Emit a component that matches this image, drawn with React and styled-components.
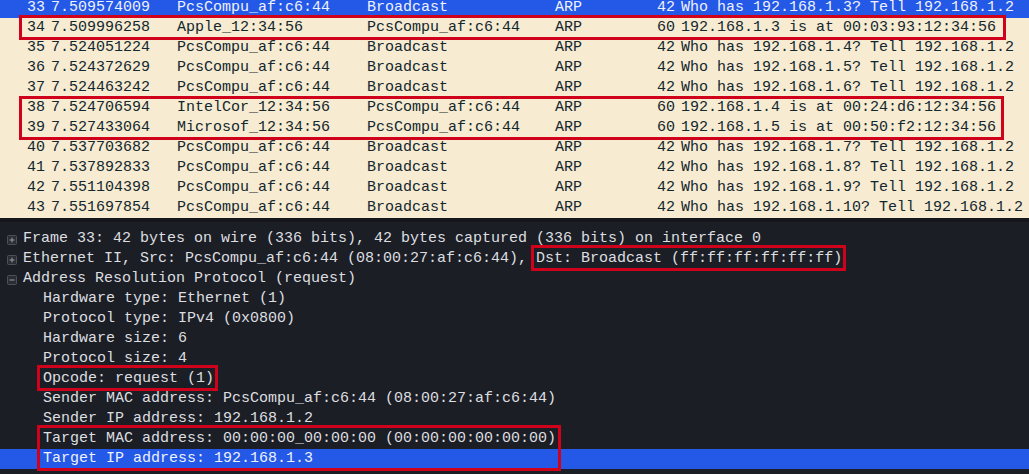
import React from "react";
import styled, { createGlobalStyle } from "styled-components";

const Global = createGlobalStyle`
  html, body { margin: 0; padding: 0; background: #1c1e25; }
  body { width: 1029px; height: 474px; overflow: hidden; }
`;

const Screen = styled.div`
  position: relative;
  width: 1029px;
  height: 474px;
  overflow: hidden;
  font-family: "Liberation Mono", "DejaVu Sans Mono", monospace;
  font-size: 15px;
  background: #1c1e25;
`;

const PacketList = styled.div`
  height: 218px;
  overflow: hidden;
  background: #f7ebd2;
`;

const Rows = styled.div`
  margin-top: -2px;
`;

const Row = styled.div`
  display: grid;
  grid-template-columns: 46px 126px 190px 188px 80px 46px 1fr;
  height: 20px;
  line-height: 20px;
  white-space: nowrap;
  background: ${(p) => (p.$selected ? "#2458e6" : "#f7ebd2")};
  color: ${(p) => (p.$selected ? "#eef2fd" : "#12272e")};
`;

const Cell = styled.span`
  overflow: hidden;
  text-align: ${(p) => (p.$right ? "right" : "left")};
  padding-left: ${(p) => (p.$right ? "0" : "5px")};
  padding-right: ${(p) => (p.$right ? "1px" : "0")};
`;

const InfoCell = styled.span`
  padding-left: 5px;
  overflow: visible;
`;

const Splitter = styled.div`
  height: 4px;
  background: #15171c;
`;

const Tree = styled.div`
  padding-top: 7px;
  background: #1c1e25;
  color: #dddee0;
`;

const TreeRow = styled.div`
  display: flex;
  align-items: center;
  height: 20px;
  line-height: 20px;
  white-space: nowrap;
  padding-left: ${(p) => (p.$child ? "43px" : "7px")};
  background: ${(p) => (p.$selected ? "#2458e6" : "transparent")};
  color: ${(p) => (p.$selected ? "#eef2fd" : "#dddee0")};
`;

const Expander = styled.svg`
  width: 10px;
  height: 10px;
  margin-right: 6px;
  margin-top: 2px;
  flex: none;
`;

const Mark = styled.div`
  position: absolute;
  box-sizing: border-box;
  border: 3px solid #d0021b;
  pointer-events: none;
`;

const packets = [
  ["33", "7.509574009", "PcsCompu_af:c6:44", "Broadcast", "ARP", "42", "Who has 192.168.1.3? Tell 192.168.1.2", true],
  ["34", "7.509996258", "Apple_12:34:56", "PcsCompu_af:c6:44", "ARP", "60", "192.168.1.3 is at 00:03:93:12:34:56"],
  ["35", "7.524051224", "PcsCompu_af:c6:44", "Broadcast", "ARP", "42", "Who has 192.168.1.4? Tell 192.168.1.2"],
  ["36", "7.524372629", "PcsCompu_af:c6:44", "Broadcast", "ARP", "42", "Who has 192.168.1.5? Tell 192.168.1.2"],
  ["37", "7.524463242", "PcsCompu_af:c6:44", "Broadcast", "ARP", "42", "Who has 192.168.1.6? Tell 192.168.1.2"],
  ["38", "7.524706594", "IntelCor_12:34:56", "PcsCompu_af:c6:44", "ARP", "60", "192.168.1.4 is at 00:24:d6:12:34:56"],
  ["39", "7.527433064", "Microsof_12:34:56", "PcsCompu_af:c6:44", "ARP", "60", "192.168.1.5 is at 00:50:f2:12:34:56"],
  ["40", "7.537703682", "PcsCompu_af:c6:44", "Broadcast", "ARP", "42", "Who has 192.168.1.7? Tell 192.168.1.2"],
  ["41", "7.537892833", "PcsCompu_af:c6:44", "Broadcast", "ARP", "42", "Who has 192.168.1.8? Tell 192.168.1.2"],
  ["42", "7.551104398", "PcsCompu_af:c6:44", "Broadcast", "ARP", "42", "Who has 192.168.1.9? Tell 192.168.1.2"],
  ["43", "7.551697854", "PcsCompu_af:c6:44", "Broadcast", "ARP", "42", "Who has 192.168.1.10? Tell 192.168.1.2"],
];

const details = [
  { text: "Frame 33: 42 bytes on wire (336 bits), 42 bytes captured (336 bits) on interface 0", exp: "+" },
  { text: "Ethernet II, Src: PcsCompu_af:c6:44 (08:00:27:af:c6:44), Dst: Broadcast (ff:ff:ff:ff:ff:ff)", exp: "+" },
  { text: "Address Resolution Protocol (request)", exp: "-" },
  { text: "Hardware type: Ethernet (1)" },
  { text: "Protocol type: IPv4 (0x0800)" },
  { text: "Hardware size: 6" },
  { text: "Protocol size: 4" },
  { text: "Opcode: request (1)" },
  { text: "Sender MAC address: PcsCompu_af:c6:44 (08:00:27:af:c6:44)" },
  { text: "Sender IP address: 192.168.1.2" },
  { text: "Target MAC address: 00:00:00_00:00:00 (00:00:00:00:00:00)" },
  { text: "Target IP address: 192.168.1.3", selected: true },
];

function ExpIcon({ open }) {
  return (
    <Expander viewBox="0 0 10 10">
      <rect x="0.5" y="0.5" width="9" height="9" rx="1" fill="#2a2d35" stroke="#4d5059" />
      <line x1="2.5" y1="5" x2="7.5" y2="5" stroke="#9a9ca3" strokeWidth="1" />
      {!open && <line x1="5" y1="2.5" x2="5" y2="7.5" stroke="#9a9ca3" strokeWidth="1" />}
    </Expander>
  );
}

export default function App() {
  return (
    <Screen>
      <Global />
      <PacketList>
        <Rows>
          {packets.map((p) => (
            <Row key={p[0]} $selected={p[7]}>
              <Cell $right>{p[0]}</Cell>
              <Cell>{p[1]}</Cell>
              <Cell>{p[2]}</Cell>
              <Cell>{p[3]}</Cell>
              <Cell>{p[4]}</Cell>
              <Cell $right>{p[5]}</Cell>
              <InfoCell>{p[6]}</InfoCell>
            </Row>
          ))}
        </Rows>
      </PacketList>
      <Splitter />
      <Tree>
        {details.map((d, i) => (
          <TreeRow key={i} $child={!d.exp} $selected={d.selected}>
            {d.exp && <ExpIcon open={d.exp === "-"} />}
            <span>{d.text}</span>
          </TreeRow>
        ))}
      </Tree>
      <Mark style={{ left: 19, top: 15, width: 987, height: 25 }} />
      <Mark style={{ left: 19, top: 96, width: 985, height: 44 }} />
      <Mark style={{ left: 531, top: 245, width: 315, height: 26 }} />
      <Mark style={{ left: 37, top: 365, width: 181, height: 26 }} />
      <Mark style={{ left: 37, top: 425, width: 524, height: 46 }} />
    </Screen>
  );
}
